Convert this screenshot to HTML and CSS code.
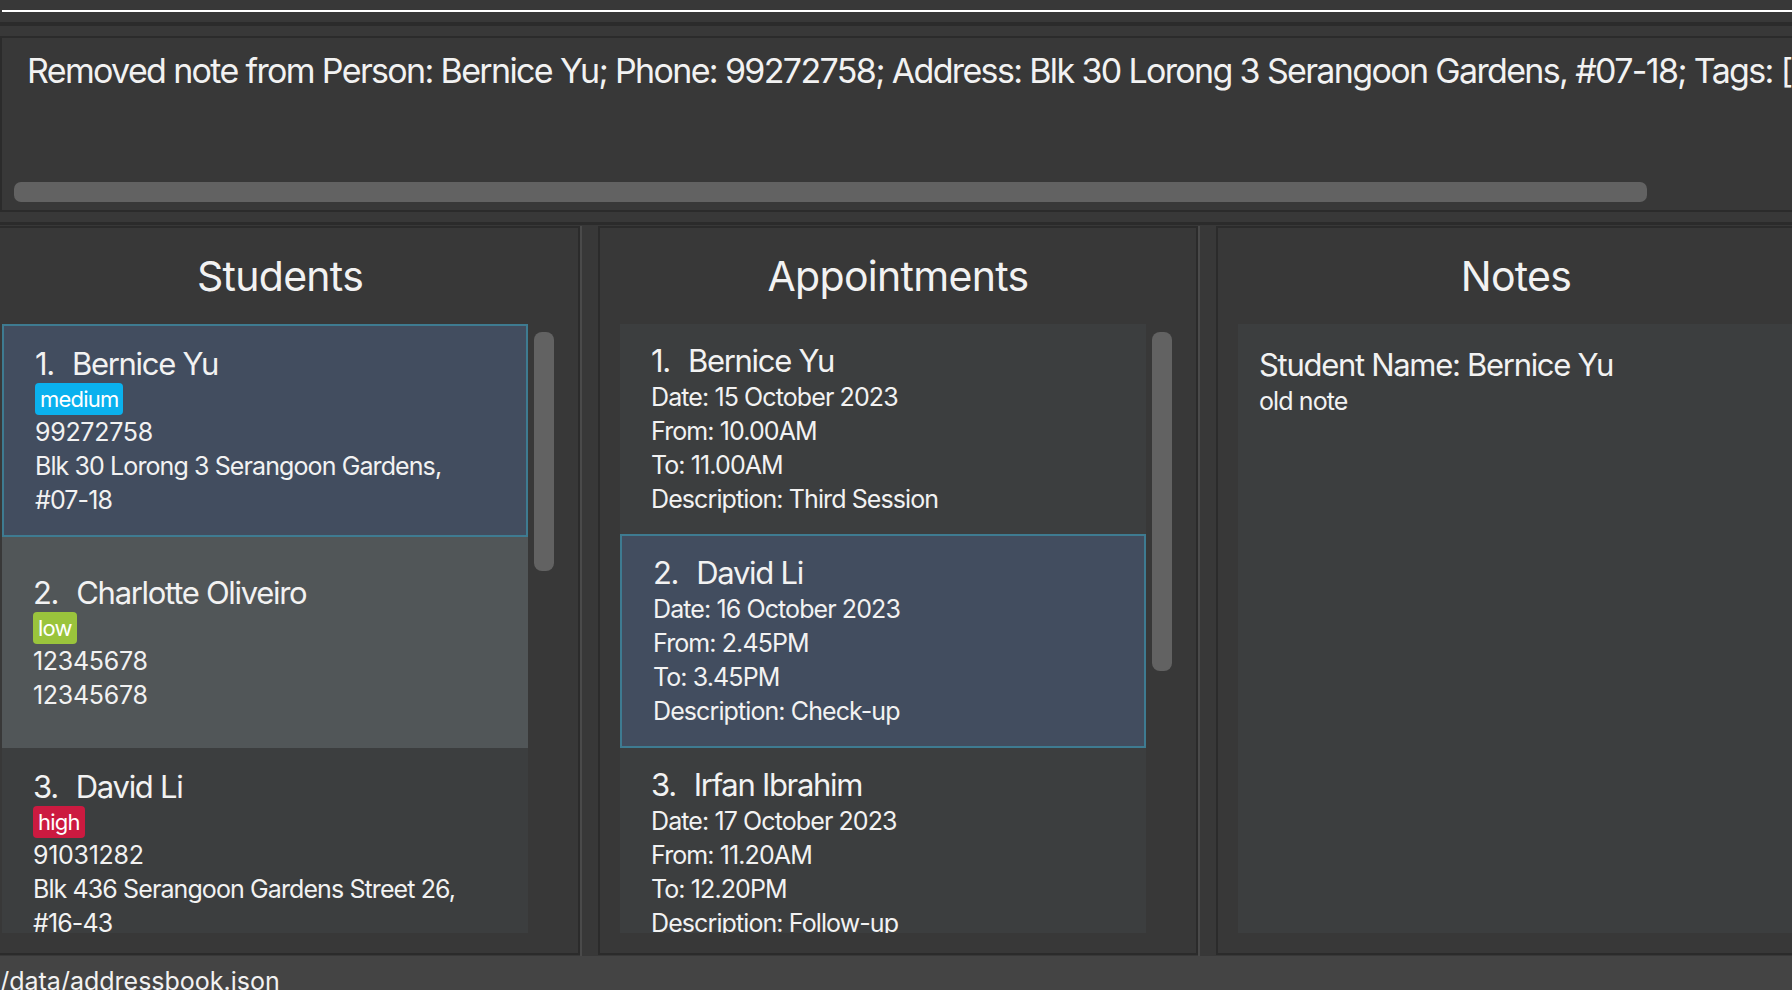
FILE: index.html
```html
<!DOCTYPE html>
<html lang="en">
<head>
<meta charset="utf-8">
<title>Address Book</title>
<link rel="stylesheet" href="styles.css">
</head>
<body>
<div class="app">
  <div class="command-box"><div class="command-field"></div></div>

  <div class="result-pane">
    <div class="result-display">
      <div class="result-text">Removed note from Person: Bernice Yu; Phone: 99272758; Address: Blk 30 Lorong 3 Serangoon Gardens, #07-18; Tags: [medium]; Note: old note</div>
      <div class="hscroll"><div class="hthumb"></div></div>
    </div>
  </div>

  <div class="main">
    <div class="panels">
      <section class="panel">
        <h2 class="panel-title">Students</h2>
        <div class="list">
          <div class="cells">
            <div class="card student selected first">
              <div class="name"><span class="idx">1.</span>Bernice Yu</div>
              <div class="tags"><span class="tag medium">medium</span></div>
              <div class="line num">99272758</div>
              <div class="line">Blk 30 Lorong 3 Serangoon Gardens, #07-18</div>
            </div>
            <div class="card student odd">
              <div class="name"><span class="idx">2.</span>Charlotte Oliveiro</div>
              <div class="tags"><span class="tag low">low</span></div>
              <div class="line num">12345678</div>
              <div class="line num">12345678</div>
            </div>
            <div class="card student even">
              <div class="name"><span class="idx">3.</span>David Li</div>
              <div class="tags"><span class="tag high">high</span></div>
              <div class="line num">91031282</div>
              <div class="line">Blk 436 Serangoon Gardens Street 26, #16-43</div>
            </div>
          </div>
          <div class="vscroll"><div class="vthumb" style="height: 239px"></div></div>
        </div>
      </section>

      <div class="divider"></div>

      <section class="panel">
        <h2 class="panel-title">Appointments</h2>
        <div class="list">
          <div class="cells">
            <div class="card appt even first">
              <div class="name"><span class="idx">1.</span>Bernice Yu</div>
              <div class="line">Date: 15 October 2023</div>
              <div class="line">From: 10.00AM</div>
              <div class="line">To: 11.00AM</div>
              <div class="line">Description: Third Session</div>
            </div>
            <div class="card appt selected">
              <div class="name"><span class="idx">2.</span>David Li</div>
              <div class="line">Date: 16 October 2023</div>
              <div class="line">From: 2.45PM</div>
              <div class="line">To: 3.45PM</div>
              <div class="line">Description: Check-up</div>
            </div>
            <div class="card appt even">
              <div class="name"><span class="idx">3.</span>Irfan Ibrahim</div>
              <div class="line">Date: 17 October 2023</div>
              <div class="line">From: 11.20AM</div>
              <div class="line">To: 12.20PM</div>
              <div class="line">Description: Follow-up</div>
            </div>
          </div>
          <div class="vscroll"><div class="vthumb" style="height: 339px"></div></div>
        </div>
      </section>

      <div class="divider"></div>

      <section class="panel">
        <h2 class="panel-title">Notes</h2>
        <div class="list notes-list">
          <div class="note-cell">
            <div class="name">Student Name: Bernice Yu</div>
            <div class="line">old note</div>
          </div>
        </div>
      </section>
    </div>

    <div class="status-bar"><span class="status-text">./data/addressbook.json</span></div>
  </div>
</div>
</body>
</html>
```

FILE: styles.css
```css
* {
  box-sizing: border-box;
}

html, body {
  margin: 0;
  padding: 0;
}

body {
  width: 1792px;
  height: 990px;
  overflow: hidden;
  background: #383838;
  color: #f2f2f2;
  font-family: Inter, "Liberation Sans", sans-serif;
}

.app {
  width: 1792px;
  height: 990px;
  overflow: hidden;
}

/* command box */
.command-box {
  height: 22px;
}

.command-field {
  margin-left: 2px;
  height: 12px;
  border-bottom: 2px solid #ffffff;
}

/* result display */
.result-pane {
  border-top: 4px solid #2b2b2b;
  padding: 10px 0 10px 0;
}

.result-display {
  height: 176px;
  width: 1820px;
  border: 2px solid #2b2b2b;
  display: flex;
  flex-direction: column;
  overflow: hidden;
}

.result-text {
  padding: 12px 0 0 25px;
  font-size: 34px;
  line-height: 41px;
  letter-spacing: -1.65px;
  white-space: nowrap;
}

.hscroll {
  margin: auto 0 8px 12px;
  height: 20px;
}

.hthumb {
  width: 1633px;
  height: 20px;
  border-radius: 7px;
  background: #626262;
}

/* main area */
.main {
  border-top: 3px solid #2b2b2b;
  padding-top: 1px;
  margin-left: -20px;
  width: 1836px;
}

.panels {
  display: flex;
  height: 729px;
}

.panel {
  flex: none;
  width: 600px;
  height: 729px;
  border: 2px solid #2b2b2b;
  padding: 20px;
  display: flex;
  flex-direction: column;
}

.divider {
  flex: none;
  width: 18px;
  height: 730px;
  border-left: 2px solid #4a4a4a;
}

.panel-title {
  margin: 0 0 20px;
  height: 56px;
  line-height: 56px;
  font-size: 41px;
  font-weight: 400;
  letter-spacing: -0.7px;
  text-align: center;
  color: #f2f2f2;
}

.list {
  display: flex;
  height: 609px;
  overflow: hidden;
}

.cells {
  width: 526px;
  flex: none;
  display: flex;
  flex-direction: column;
}

.vscroll {
  width: 30px;
  flex: none;
  padding: 8px 4px 0 6px;
}

.vthumb {
  width: 20px;
  border-radius: 8px;
  background: #626262;
}

/* cards */
.card {
  flex: none;
  display: flex;
  flex-direction: column;
  justify-content: center;
  padding: 0 31px;
}

.card.student {
  height: 211px;
}

.card.appt {
  height: 210px;
}

.card.even {
  background: #3c3e3f;
}

.card.odd {
  background: #515658;
}

.card.selected {
  background: #424d5f;
  border: 2px solid #3e7b91;
  padding: 0 31px;
}

.card.student.selected {
  height: 213px;
}

.card.appt.selected {
  height: 214px;
}

.name {
  font-size: 31px;
  line-height: 38px;
  letter-spacing: -1.3px;
  white-space: nowrap;
}

.idx {
  margin-right: 18px;
}

.line {
  font-size: 25px;
  line-height: 34px;
  letter-spacing: -0.9px;
}

.line.num {
  letter-spacing: -0.3px;
}

.tags {
  display: flex;
  height: 32px;
}

.tag {
  height: 32px;
  line-height: 32px;
  font-size: 22px;
  letter-spacing: -0.8px;
  padding: 0 5px 0 5px;
  border-radius: 4px;
  color: #ffffff;
}

.tag.medium {
  background: #0ab1ee;
}

.tag.low {
  background: #9ac43c;
}

.tag.high {
  background: #cc1a40;
}

/* notes */
.notes-list {
  background: #3c3e3f;
  width: 578px;
}

.note-cell {
  padding: 22px 21px 0;
}

/* status bar */
.status-bar {
  margin-top: 1px;
  height: 40px;
  background: #444444;
  padding: 10px 0 0 13px;
}

.status-text {
  font-size: 25px;
  line-height: 30px;
  white-space: nowrap;
}
```
